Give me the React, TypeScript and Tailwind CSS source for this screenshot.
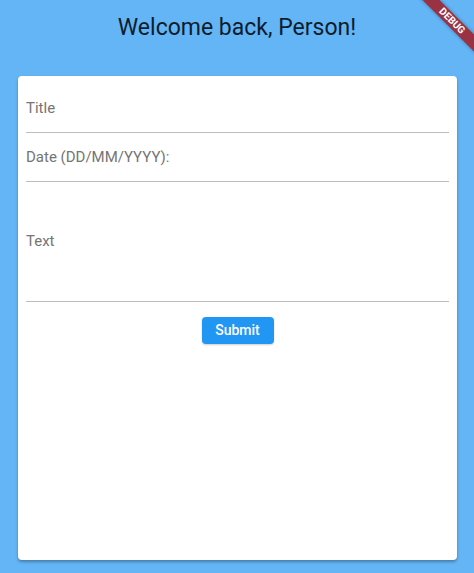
export default function App() {
  const fields = [
    { label: 'Title', h: 'h-[49px]' },
    { label: 'Date (DD/MM/YYYY):', h: 'h-[49px]' },
    { label: 'Text', h: 'h-[120px]' },
  ]

  return (
    <div className="relative h-[573px] w-full overflow-hidden bg-[#64b5f6] font-['Roboto',sans-serif]">
      <h1 className="pt-[14px] text-center text-[23px] leading-[28px] font-normal text-[#0e1d2c]">Welcome back, Person!</h1>

      <div className="mx-[18px] mt-[34px] h-[484px] w-[439px] rounded-[4px] bg-white px-2 pt-2 shadow-[0_2px_3px_rgba(0,0,0,0.3)]">
        {fields.map((f) => (
          <div key={f.label} className={`flex ${f.h} items-center border-b border-[#bdbdbd]`}>
            <span className="text-[15px] text-[#757575]">{f.label}</span>
          </div>
        ))}
        <div className="mt-[15px] flex justify-center">
          <button className="h-[27px] w-[72px] rounded-[4px] bg-[#2196f3] text-[14px] font-medium text-white shadow-[0_1px_2px_rgba(0,0,0,0.2)]">
            Submit
          </button>
        </div>
      </div>

      {/* debug ribbon */}
      <div className="absolute top-[15px] left-[392px] flex h-[12px] w-[120px] rotate-45 items-center justify-center bg-[#993344] shadow-[0_0_4px_rgba(0,0,0,0.35)]">
        <span className="text-[10px] leading-none font-bold text-white">DEBUG</span>
      </div>
    </div>
  )
}
